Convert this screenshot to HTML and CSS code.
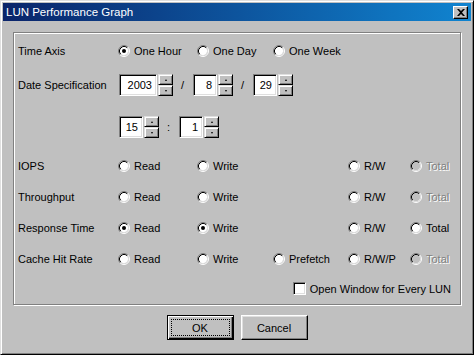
FILE: index.html
```html
<!DOCTYPE html>
<html lang="en">
<head>
  <meta charset="UTF-8" />
  <title>LUN Performance Graph</title>
  <link rel="stylesheet" href="styles.css">
</head>
<body>
  <svg class="defs" width="0" height="0">
    <symbol id="rb" viewBox="0 0 12 12">
      <circle cx="6" cy="6" r="4.2" />
      <path d="M2.11 9.89 A5.5 5.5 0 0 1 9.89 2.11" fill="none" stroke="#808080" />
      <path d="M9.89 2.11 A5.5 5.5 0 0 1 2.11 9.89" fill="none" stroke="#ffffff" />
      <path d="M2.82 9.18 A4.5 4.5 0 0 1 9.18 2.82" fill="none" stroke="#000000" />
      <path d="M9.18 2.82 A4.5 4.5 0 0 1 2.82 9.18" fill="none" stroke="#dfdfdf" />
    </symbol>
  </svg>

  <div class="window">
    <div class="titlebar">
      <span class="title">LUN Performance Graph</span>
      <span class="close">
        <svg width="8" height="7" viewBox="0 0 8 7"><path d="M0 0h2l2 2 2-2h2L5 3.5 8 7H6L4 5 2 7H0l3-3.5z" fill="#000"/></svg>
      </span>
    </div>

    <div class="content">
      <div class="group">
        <div class="row grid">
          <span class="label">Time Axis</span>
          <span class="opt"><svg class="radio"><use href="#rb"/><circle class="dot" cx="6" cy="6" r="2"/></svg>One Hour</span>
          <span class="opt"><svg class="radio"><use href="#rb"/></svg>One Day</span>
          <span class="opt"><svg class="radio"><use href="#rb"/></svg>One Week</span>
        </div>

        <div class="row date">
          <span class="label">Date Specification</span>
          <span class="spin">
            <span class="box wide">2003</span>
            <span class="arrows"><span class="arr up"></span><span class="arr down"></span></span>
          </span>
          <span class="sep">/</span>
          <span class="spin">
            <span class="box">8</span>
            <span class="arrows"><span class="arr up"></span><span class="arr down"></span></span>
          </span>
          <span class="sep">/</span>
          <span class="spin">
            <span class="box">29</span>
            <span class="arrows"><span class="arr up"></span><span class="arr down"></span></span>
          </span>
        </div>

        <div class="row time">
          <span class="label"></span>
          <span class="spin">
            <span class="box">15</span>
            <span class="arrows"><span class="arr up"></span><span class="arr down"></span></span>
          </span>
          <span class="sep">:</span>
          <span class="spin">
            <span class="box">1</span>
            <span class="arrows"><span class="arr up"></span><span class="arr down"></span></span>
          </span>
        </div>

        <div class="row grid first">
          <span class="label">IOPS</span>
          <span class="opt"><svg class="radio"><use href="#rb"/></svg>Read</span>
          <span class="opt"><svg class="radio"><use href="#rb"/></svg>Write</span>
          <span></span>
          <span class="opt"><svg class="radio"><use href="#rb"/></svg>R/W</span>
          <span class="opt off"><svg class="radio"><use href="#rb"/></svg>Total</span>
        </div>

        <div class="row grid">
          <span class="label">Throughput</span>
          <span class="opt"><svg class="radio"><use href="#rb"/></svg>Read</span>
          <span class="opt"><svg class="radio"><use href="#rb"/></svg>Write</span>
          <span></span>
          <span class="opt"><svg class="radio"><use href="#rb"/></svg>R/W</span>
          <span class="opt off"><svg class="radio"><use href="#rb"/></svg>Total</span>
        </div>

        <div class="row grid">
          <span class="label">Response Time</span>
          <span class="opt"><svg class="radio"><use href="#rb"/><circle class="dot" cx="6" cy="6" r="2"/></svg>Read</span>
          <span class="opt"><svg class="radio"><use href="#rb"/><circle class="dot" cx="6" cy="6" r="2"/></svg>Write</span>
          <span></span>
          <span class="opt"><svg class="radio"><use href="#rb"/></svg>R/W</span>
          <span class="opt"><svg class="radio"><use href="#rb"/></svg>Total</span>
        </div>

        <div class="row grid">
          <span class="label">Cache Hit Rate</span>
          <span class="opt"><svg class="radio"><use href="#rb"/></svg>Read</span>
          <span class="opt"><svg class="radio"><use href="#rb"/></svg>Write</span>
          <span class="opt"><svg class="radio"><use href="#rb"/></svg>Prefetch</span>
          <span class="opt"><svg class="radio"><use href="#rb"/></svg>R/W/P</span>
          <span class="opt off"><svg class="radio"><use href="#rb"/></svg>Total</span>
        </div>

        <div class="row check">
          <span class="checkbox"></span>
          <span>Open Window for Every LUN</span>
        </div>
      </div>

      <div class="buttons">
        <span class="btn default"><span class="focus">OK</span></span>
        <span class="btn">Cancel</span>
      </div>
    </div>
  </div>
</body>
</html>
```

FILE: styles.css
```css
* {
  margin: 0;
  padding: 0;
  box-sizing: border-box;
}

body {
  font-family: "Liberation Sans", Arial, sans-serif;
  font-size: 11px;
  color: #000;
  background: #c0c0c0;
}

.defs {
  position: absolute;
}

.window {
  width: 474px;
  height: 355px;
  background: #c0c0c0;
  border: 1px solid;
  border-color: #dfdfdf #000 #000 #dfdfdf;
  box-shadow: inset 1px 1px 0 #fff, inset -1px -1px 0 #808080;
  padding: 2px;
}

.titlebar {
  height: 18px;
  display: flex;
  align-items: center;
  justify-content: space-between;
  padding: 0 3px 0 3px;
  background: linear-gradient(to right, #0a246a, #1084d0);
  color: #fff;
}

.title {
  font-size: 11.5px;
}

.close {
  width: 15px;
  height: 13px;
  display: flex;
  align-items: center;
  justify-content: center;
  background: #c0c0c0;
  border: 1px solid;
  border-color: #fff #000 #000 #fff;
  box-shadow: inset -1px -1px 0 #808080;
}

.content {
  padding: 11px 10px 0 10px;
}

.group {
  height: 273px;
  border: 1px solid #808080;
  box-shadow: inset 1px 1px 0 #fff, 1px 1px 0 #fff;
  padding: 6px 4px 0 4px;
}

.row {
  height: 23px;
  display: flex;
  align-items: center;
}

.grid {
  display: grid;
  grid-template-columns: 100px 79px 76px 75px 62px 1fr;
  align-items: center;
}

.label {
  width: 100px;
  flex: none;
}

.opt {
  display: flex;
  align-items: center;
  gap: 4px;
}

.radio {
  width: 12px;
  height: 12px;
  fill: #fff;
  flex: none;
}

.radio .dot {
  fill: #000;
}

.opt.off {
  color: #808080;
  text-shadow: 1px 1px 0 #fff;
}

.opt.off .radio {
  fill: #c0c0c0;
}

.date {
  height: 22px;
  margin-top: 12px;
}

.time {
  height: 22px;
  margin-top: 20px;
}

.first {
  margin-top: 16px;
}

.grid + .grid {
  margin-top: 8px;
}

.spin {
  display: flex;
  height: 22px;
  margin-left: 1px;
}

.box {
  width: 24px;
  height: 22px;
  background: #fff;
  border: 1px solid;
  border-color: #808080 #fff #fff #808080;
  box-shadow: inset 1px 1px 0 #000, inset -1px -1px 0 #dfdfdf;
  display: flex;
  align-items: center;
  justify-content: flex-end;
  padding-right: 4px;
}

.box.wide {
  width: 38px;
}

.arrows {
  display: flex;
  flex-direction: column;
  margin-left: 1px;
}

.arr {
  width: 15px;
  height: 11px;
  background: #c0c0c0;
  border: 1px solid;
  border-color: #dfdfdf #000 #000 #dfdfdf;
  box-shadow: inset 1px 1px 0 #fff, inset -1px -1px 0 #808080;
  display: flex;
  align-items: center;
  justify-content: center;
}

.arr::after {
  content: "";
  border: 2px solid transparent;
  border-left-width: 1.5px;
  border-right-width: 1.5px;
}

.arr.up::after {
  border-top: 0;
  border-bottom-color: #000;
}

.arr.down::after {
  border-bottom: 0;
  border-top-color: #000;
}

.sep {
  width: 19px;
  text-align: center;
}

.check {
  margin-top: 7px;
  justify-content: flex-end;
  gap: 4px;
  padding-right: 5px;
}

.checkbox {
  width: 13px;
  height: 13px;
  background: #fff;
  border: 1px solid;
  border-color: #808080 #fff #fff #808080;
  box-shadow: inset 1px 1px 0 #000, inset -1px -1px 0 #dfdfdf;
}

.buttons {
  display: flex;
  justify-content: center;
  gap: 7px;
  margin-top: 10px;
}

.btn {
  width: 67px;
  height: 25px;
  display: flex;
  align-items: center;
  justify-content: center;
  background: #c0c0c0;
  border: 1px solid;
  border-color: #fff #000 #000 #fff;
  box-shadow: inset -1px -1px 0 #808080, inset 1px 1px 0 #dfdfdf;
}

.btn.default {
  border: 1px solid #000;
  box-shadow: inset 1px 1px 0 #fff, inset -1px -1px 0 #000, inset -2px -2px 0 #808080;
  padding: 3px;
}

.focus {
  width: 100%;
  height: 100%;
  border: 1px dotted #000;
  display: flex;
  align-items: center;
  justify-content: center;
}
```
